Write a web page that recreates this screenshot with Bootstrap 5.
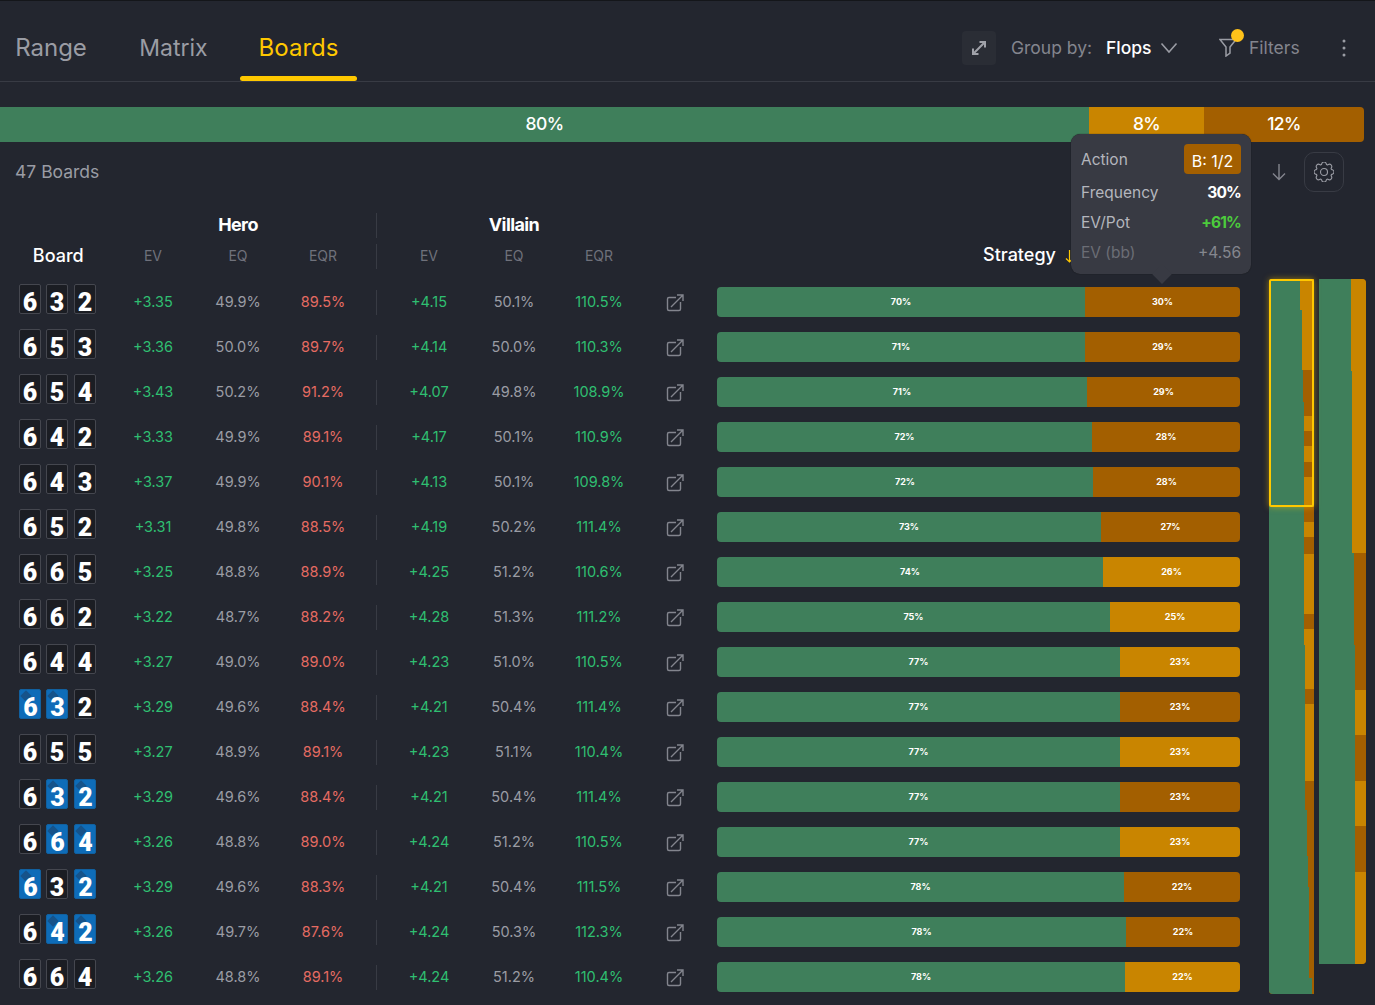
<!doctype html>
<html lang="en"><head><meta charset="utf-8"><title>Boards</title>
<link href="https://cdn.jsdelivr.net/npm/bootstrap@5.3.0/dist/css/bootstrap.min.css" rel="stylesheet">
<style>
html,body{height:1005px;overflow:hidden}
body{background:#23262f;color:#9a9ca4;font-family:Inter,"Liberation Sans",sans-serif;font-size:14.5px;border-top:1px solid #14161a}
.topnav{height:81px;border-bottom:1px solid #383b44}
.tabx{height:80px;padding-top:14px;font-size:24px;color:#9a9ca4;position:relative;text-decoration:none}
.tabx.on{color:#ffc800}
.tabx.on::after{content:"";position:absolute;left:0;right:0;bottom:0;height:5px;background:#ffc800;border-radius:3px}
.t1{width:102px}.t2{width:105px;margin-left:19px;font-size:23px}.t3{width:117px;margin-left:14px}
.navr{padding-top:14px}
.expbtn{width:34px;height:34px;background:#2a2d35;border-radius:4px}
.gby{font-size:17.5px;color:#83858e;margin-left:15px;width:95px}
.flops{font-size:17.5px;color:#fff;font-weight:500;width:54px}
.fwrap{position:relative;margin-left:41px;width:30px;height:20px}
.ydot{position:absolute;left:12px;top:-9px;width:13px;height:13px;border-radius:50%;background:#ffc21a}
.fl{font-size:17.5px;color:#83858e;width:86px}
.kebab{width:18px;margin-right:22px}
.topbar{margin-top:25px;height:35px;width:1364px;border-radius:0 4px 4px 0;overflow:hidden;color:#fff;font-size:17.5px;font-weight:500;letter-spacing:-.6px}
.sgreen{background:#3f7f5b}.so{background:#c98500}.sd{background:#a35f00}
.tools{height:60px;padding-left:15px;font-size:17.5px}
.gear{width:40px;height:40px;border:1px solid #383b44;border-radius:10px;margin:0 31px 0 17px}
.hrow{height:25px;margin-top:11px}
.srow{height:20px;margin-top:8px;margin-bottom:13.5px}
.cb{width:110.5px}.cn{width:85px;text-align:center;flex:none}.cd{width:21px;flex:none;display:flex;justify-content:center}
.cg{width:255px;text-align:center;color:#fff;font-size:18px;font-weight:700;letter-spacing:-.6px;flex:none;padding-bottom:2px}
.vdiv{width:1px;background:#383b44;height:25px}
.hd{color:#6f717b;font-size:14px;padding-bottom:2px}
.bd{color:#fff;font-size:18px;font-weight:500;text-align:center;padding-left:6px;padding-bottom:2px}
.strat{position:absolute;left:983px;top:-5px;color:#fff;font-size:18px;font-weight:500}
.rowx{height:45px}
.rowx .vdiv{height:25px}
.plus{color:#2fbf71}.redx{color:#e56b62}
.cds{gap:5px;padding-left:19px;margin-bottom:6px}
.pc{width:22px;height:30px;box-sizing:border-box;background:#1b1d23;border:1px solid #45474f;border-radius:2px;color:#fff;font:900 25px/20px Roboto,sans-serif;text-align:center;position:relative;z-index:0;padding-top:8px}
.pc:last-child{margin-left:1px}
.pc.bl{background:#0e6cb8;border-color:#11609f;padding-left:1px}
.pc.bl::before{content:"";position:absolute;left:2px;top:2px;width:8px;height:8px;background:#16538a;transform:rotate(45deg);z-index:-1}
.ext{width:67px;flex:none;display:flex;justify-content:center;padding-top:1px}
.stb{width:523px;height:30px;margin-left:8.5px;border-radius:4px;overflow:hidden;color:#fff;font-size:9px;font-weight:700;flex:none}
.mini{position:relative;margin-left:29px;gap:5px;margin-top:-.5px}
.mcol{width:45px;overflow:hidden;border-radius:4px 0 0 4px;background:#a35f00}
.mcol.m2{width:47px;border-radius:0 4px 4px 0}
.mseg{display:block}.mseg i{display:block;height:100%;background:#3f7f5b}
.msel{position:absolute;left:0;top:0;width:45px;height:228px;border:2px solid #ffc800;border-radius:2px;box-shadow:0 0 6px rgba(255,200,0,.5)}
.tipx{position:absolute;left:1071px;top:134px;width:180px;height:140px;background:#383a43;border-radius:9px;padding:10px 10px 0;box-shadow:0 0 1px #111;z-index:5;font-size:15.5px;color:#b4b6bd}
.tipx::after{content:"";position:absolute;left:84px;bottom:-7px;width:14px;height:14px;background:#383a43;transform:rotate(45deg);z-index:-1}
.tr{height:30px}
.tr.tfirst{padding-top:1px}
.tagb{width:57px;height:30px;margin-top:-1px;padding-top:3px;background:#a35f00;border-radius:4px;color:#fff;font-size:16px}
.tw{color:#fff;font-weight:700;letter-spacing:-.8px}.tg{color:#4ccc3c;font-weight:700;letter-spacing:-.8px}.mut{color:#6b6d75}.mut2{color:#85878f}
</style></head><body>
<nav class="topnav d-flex align-items-center">
 <a class="tabx t1 d-flex align-items-center justify-content-center" href="#">Range</a>
 <a class="tabx t2 d-flex align-items-center justify-content-center" href="#">Matrix</a>
 <a class="tabx t3 on d-flex align-items-center justify-content-center" href="#">Boards</a>
 <div class="navr ms-auto d-flex align-items-center">
  <div class="expbtn d-flex align-items-center justify-content-center"><svg width="18" height="18" viewBox="0 0 18 18" fill="none" stroke="#a0a2a9" stroke-width="2"><path d="M3 15L15 3M9.500 3H15V8.500M3 9.500V15H8.500"/></svg></div>
  <span class="gby">Group by:</span><span class="flops">Flops</span>
  <svg width="18" height="12" viewBox="0 0 18 12" fill="none" stroke="#9a9ca4" stroke-width="1.600"><path d="M1.500 1.500L9 10l7.500-8.500"/></svg>
  <div class="fwrap"><svg width="18" height="19" viewBox="0 0 18 19" fill="none" stroke="#9a9ca4" stroke-width="1.500" class="d-block"><path d="M1 1.500h16L11 9v6l-4 3V9z"/></svg><span class="ydot"></span></div>
  <span class="fl">Filters</span>
  <svg class="kebab" width="18" height="18" viewBox="0 0 18 18" fill="#9a9ca4"><circle cx="9" cy="2" r="1.500"/><circle cx="9" cy="9" r="1.500"/><circle cx="9" cy="16" r="1.500"/></svg>
 </div>
</nav>
<div class="topbar d-flex text-center">
 <div class="sgreen d-flex align-items-center justify-content-center" style="width:1089px">80%</div>
 <div class="so d-flex align-items-center justify-content-center" style="width:115px">8%</div>
 <div class="sd d-flex align-items-center justify-content-center flex-grow-1">12%</div>
</div>
<div class="tools d-flex align-items-center">
 <span>47 Boards</span>
 <svg class="ms-auto" width="16" height="18" viewBox="0 0 16 18" fill="none" stroke="#83858e" stroke-width="1.400"><path d="M8 1v15.500M2 10.500l6 6 6-6"/></svg>
 <div class="gear d-flex align-items-center justify-content-center"><svg width="20" height="20" viewBox="0 0 16 16" fill="none" stroke="#9a9ca4" stroke-width=".9"><circle cx="8" cy="8" r="2.800"/><path d="M9.796 1.343c-.527-1.790-3.065-1.790-3.592 0l-.094.319a.873.873 0 0 1-1.255.52l-.292-.16c-1.640-.892-3.433.902-2.540 2.541l.159.292a.873.873 0 0 1-.52 1.255l-.319.094c-1.790.527-1.790 3.065 0 3.592l.319.094a.873.873 0 0 1 .52 1.255l-.16.292c-.892 1.640.901 3.434 2.541 2.540l.292-.159a.873.873 0 0 1 1.255.52l.094.319c.527 1.790 3.065 1.790 3.592 0l.094-.319a.873.873 0 0 1 1.255-.52l.292.16c1.640.893 3.434-.902 2.540-2.541l-.159-.292a.873.873 0 0 1 .52-1.255l.319-.094c1.790-.527 1.790-3.065 0-3.592l-.319-.094a.873.873 0 0 1-.52-1.255l.16-.292c.893-1.640-.902-3.433-2.541-2.540l-.292.159a.873.873 0 0 1-1.255-.52z"/></svg></div>
</div>
<div class="hrow d-flex align-items-center"><div class="cb"></div><div class="cg">Hero</div><div class="cd"><div class="vdiv"></div></div><div class="cg">Villain</div></div>
<div class="srow d-flex align-items-center position-relative">
 <div class="cb bd">Board</div><div class="cn hd">EV</div><div class="cn hd">EQ</div><div class="cn hd">EQR</div><div class="cd"><div class="vdiv"></div></div><div class="cn hd">EV</div><div class="cn hd">EQ</div><div class="cn hd">EQR</div>
 <span class="strat">Strategy <svg width="9" height="13" viewBox="0 0 9 13" fill="none" stroke="#ffc800" stroke-width="1.200" class="ms-1"><path d="M4.500 0v12M1 8.500l3.500 3.500L8 8.500"/></svg></span>
</div>
<div class="tipx">
 <div class="tr tfirst d-flex align-items-center justify-content-between"><span>Action</span><span class="tagb d-flex align-items-center justify-content-center">B: 1/2</span></div>
 <div class="tr d-flex align-items-center justify-content-between mt-1"><span>Frequency</span><span class="tw">30%</span></div>
 <div class="tr d-flex align-items-center justify-content-between"><span>EV/Pot</span><span class="tg">+61%</span></div>
 <div class="tr d-flex align-items-center justify-content-between"><span class="mut">EV (bb)</span><span class="mut2">+4.56</span></div>
</div>
<svg width="0" height="0" class="position-absolute"><defs><symbol id="extl" viewBox="0 0 18 18"><g fill="none" stroke="#83858e" stroke-width="1.400"><path d="M10 3.500H3a1.500 1.500 0 0 0-1.500 1.500v10A1.500 1.500 0 0 0 3 16.500h10a1.500 1.500 0 0 0 1.500-1.500V8"/><path d="M5 13L17 1M11 1h6v6"/></g></symbol></defs></svg>
<div class="d-flex">
<div>
<div class="rowx d-flex align-items-center"><div class="cb d-flex cds"><span class="pc">6</span><span class="pc">3</span><span class="pc">2</span></div><div class="cn plus">+3.35</div><div class="cn">49.9%</div><div class="cn redx">89.5%</div><div class="cd"><div class="vdiv"></div></div><div class="cn plus">+4.15</div><div class="cn">50.1%</div><div class="cn plus">110.5%</div><div class="ext"><svg width="18" height="18"><use href="#extl"/></svg></div><div class="stb d-flex"><div class="sgreen d-flex align-items-center justify-content-center" style="width:368px">70%</div><div class="sd flex-grow-1 d-flex align-items-center justify-content-center">30%</div></div></div>
<div class="rowx d-flex align-items-center"><div class="cb d-flex cds"><span class="pc">6</span><span class="pc">5</span><span class="pc">3</span></div><div class="cn plus">+3.36</div><div class="cn">50.0%</div><div class="cn redx">89.7%</div><div class="cd"><div class="vdiv"></div></div><div class="cn plus">+4.14</div><div class="cn">50.0%</div><div class="cn plus">110.3%</div><div class="ext"><svg width="18" height="18"><use href="#extl"/></svg></div><div class="stb d-flex"><div class="sgreen d-flex align-items-center justify-content-center" style="width:368px">71%</div><div class="sd flex-grow-1 d-flex align-items-center justify-content-center">29%</div></div></div>
<div class="rowx d-flex align-items-center"><div class="cb d-flex cds"><span class="pc">6</span><span class="pc">5</span><span class="pc">4</span></div><div class="cn plus">+3.43</div><div class="cn">50.2%</div><div class="cn redx">91.2%</div><div class="cd"><div class="vdiv"></div></div><div class="cn plus">+4.07</div><div class="cn">49.8%</div><div class="cn plus">108.9%</div><div class="ext"><svg width="18" height="18"><use href="#extl"/></svg></div><div class="stb d-flex"><div class="sgreen d-flex align-items-center justify-content-center" style="width:370px">71%</div><div class="sd flex-grow-1 d-flex align-items-center justify-content-center">29%</div></div></div>
<div class="rowx d-flex align-items-center"><div class="cb d-flex cds"><span class="pc">6</span><span class="pc">4</span><span class="pc">2</span></div><div class="cn plus">+3.33</div><div class="cn">49.9%</div><div class="cn redx">89.1%</div><div class="cd"><div class="vdiv"></div></div><div class="cn plus">+4.17</div><div class="cn">50.1%</div><div class="cn plus">110.9%</div><div class="ext"><svg width="18" height="18"><use href="#extl"/></svg></div><div class="stb d-flex"><div class="sgreen d-flex align-items-center justify-content-center" style="width:375px">72%</div><div class="sd flex-grow-1 d-flex align-items-center justify-content-center">28%</div></div></div>
<div class="rowx d-flex align-items-center"><div class="cb d-flex cds"><span class="pc">6</span><span class="pc">4</span><span class="pc">3</span></div><div class="cn plus">+3.37</div><div class="cn">49.9%</div><div class="cn redx">90.1%</div><div class="cd"><div class="vdiv"></div></div><div class="cn plus">+4.13</div><div class="cn">50.1%</div><div class="cn plus">109.8%</div><div class="ext"><svg width="18" height="18"><use href="#extl"/></svg></div><div class="stb d-flex"><div class="sgreen d-flex align-items-center justify-content-center" style="width:376px">72%</div><div class="sd flex-grow-1 d-flex align-items-center justify-content-center">28%</div></div></div>
<div class="rowx d-flex align-items-center"><div class="cb d-flex cds"><span class="pc">6</span><span class="pc">5</span><span class="pc">2</span></div><div class="cn plus">+3.31</div><div class="cn">49.8%</div><div class="cn redx">88.5%</div><div class="cd"><div class="vdiv"></div></div><div class="cn plus">+4.19</div><div class="cn">50.2%</div><div class="cn plus">111.4%</div><div class="ext"><svg width="18" height="18"><use href="#extl"/></svg></div><div class="stb d-flex"><div class="sgreen d-flex align-items-center justify-content-center" style="width:384px">73%</div><div class="sd flex-grow-1 d-flex align-items-center justify-content-center">27%</div></div></div>
<div class="rowx d-flex align-items-center"><div class="cb d-flex cds"><span class="pc">6</span><span class="pc">6</span><span class="pc">5</span></div><div class="cn plus">+3.25</div><div class="cn">48.8%</div><div class="cn redx">88.9%</div><div class="cd"><div class="vdiv"></div></div><div class="cn plus">+4.25</div><div class="cn">51.2%</div><div class="cn plus">110.6%</div><div class="ext"><svg width="18" height="18"><use href="#extl"/></svg></div><div class="stb d-flex"><div class="sgreen d-flex align-items-center justify-content-center" style="width:386px">74%</div><div class="so flex-grow-1 d-flex align-items-center justify-content-center">26%</div></div></div>
<div class="rowx d-flex align-items-center"><div class="cb d-flex cds"><span class="pc">6</span><span class="pc">6</span><span class="pc">2</span></div><div class="cn plus">+3.22</div><div class="cn">48.7%</div><div class="cn redx">88.2%</div><div class="cd"><div class="vdiv"></div></div><div class="cn plus">+4.28</div><div class="cn">51.3%</div><div class="cn plus">111.2%</div><div class="ext"><svg width="18" height="18"><use href="#extl"/></svg></div><div class="stb d-flex"><div class="sgreen d-flex align-items-center justify-content-center" style="width:393px">75%</div><div class="so flex-grow-1 d-flex align-items-center justify-content-center">25%</div></div></div>
<div class="rowx d-flex align-items-center"><div class="cb d-flex cds"><span class="pc">6</span><span class="pc">4</span><span class="pc">4</span></div><div class="cn plus">+3.27</div><div class="cn">49.0%</div><div class="cn redx">89.0%</div><div class="cd"><div class="vdiv"></div></div><div class="cn plus">+4.23</div><div class="cn">51.0%</div><div class="cn plus">110.5%</div><div class="ext"><svg width="18" height="18"><use href="#extl"/></svg></div><div class="stb d-flex"><div class="sgreen d-flex align-items-center justify-content-center" style="width:403px">77%</div><div class="so flex-grow-1 d-flex align-items-center justify-content-center">23%</div></div></div>
<div class="rowx d-flex align-items-center"><div class="cb d-flex cds"><span class="pc bl">6</span><span class="pc bl">3</span><span class="pc">2</span></div><div class="cn plus">+3.29</div><div class="cn">49.6%</div><div class="cn redx">88.4%</div><div class="cd"><div class="vdiv"></div></div><div class="cn plus">+4.21</div><div class="cn">50.4%</div><div class="cn plus">111.4%</div><div class="ext"><svg width="18" height="18"><use href="#extl"/></svg></div><div class="stb d-flex"><div class="sgreen d-flex align-items-center justify-content-center" style="width:403px">77%</div><div class="sd flex-grow-1 d-flex align-items-center justify-content-center">23%</div></div></div>
<div class="rowx d-flex align-items-center"><div class="cb d-flex cds"><span class="pc">6</span><span class="pc">5</span><span class="pc">5</span></div><div class="cn plus">+3.27</div><div class="cn">48.9%</div><div class="cn redx">89.1%</div><div class="cd"><div class="vdiv"></div></div><div class="cn plus">+4.23</div><div class="cn">51.1%</div><div class="cn plus">110.4%</div><div class="ext"><svg width="18" height="18"><use href="#extl"/></svg></div><div class="stb d-flex"><div class="sgreen d-flex align-items-center justify-content-center" style="width:403px">77%</div><div class="so flex-grow-1 d-flex align-items-center justify-content-center">23%</div></div></div>
<div class="rowx d-flex align-items-center"><div class="cb d-flex cds"><span class="pc">6</span><span class="pc bl">3</span><span class="pc bl">2</span></div><div class="cn plus">+3.29</div><div class="cn">49.6%</div><div class="cn redx">88.4%</div><div class="cd"><div class="vdiv"></div></div><div class="cn plus">+4.21</div><div class="cn">50.4%</div><div class="cn plus">111.4%</div><div class="ext"><svg width="18" height="18"><use href="#extl"/></svg></div><div class="stb d-flex"><div class="sgreen d-flex align-items-center justify-content-center" style="width:403px">77%</div><div class="sd flex-grow-1 d-flex align-items-center justify-content-center">23%</div></div></div>
<div class="rowx d-flex align-items-center"><div class="cb d-flex cds"><span class="pc">6</span><span class="pc bl">6</span><span class="pc bl">4</span></div><div class="cn plus">+3.26</div><div class="cn">48.8%</div><div class="cn redx">89.0%</div><div class="cd"><div class="vdiv"></div></div><div class="cn plus">+4.24</div><div class="cn">51.2%</div><div class="cn plus">110.5%</div><div class="ext"><svg width="18" height="18"><use href="#extl"/></svg></div><div class="stb d-flex"><div class="sgreen d-flex align-items-center justify-content-center" style="width:403px">77%</div><div class="so flex-grow-1 d-flex align-items-center justify-content-center">23%</div></div></div>
<div class="rowx d-flex align-items-center"><div class="cb d-flex cds"><span class="pc bl">6</span><span class="pc">3</span><span class="pc bl">2</span></div><div class="cn plus">+3.29</div><div class="cn">49.6%</div><div class="cn redx">88.3%</div><div class="cd"><div class="vdiv"></div></div><div class="cn plus">+4.21</div><div class="cn">50.4%</div><div class="cn plus">111.5%</div><div class="ext"><svg width="18" height="18"><use href="#extl"/></svg></div><div class="stb d-flex"><div class="sgreen d-flex align-items-center justify-content-center" style="width:407px">78%</div><div class="sd flex-grow-1 d-flex align-items-center justify-content-center">22%</div></div></div>
<div class="rowx d-flex align-items-center"><div class="cb d-flex cds"><span class="pc">6</span><span class="pc bl">4</span><span class="pc bl">2</span></div><div class="cn plus">+3.26</div><div class="cn">49.7%</div><div class="cn redx">87.6%</div><div class="cd"><div class="vdiv"></div></div><div class="cn plus">+4.24</div><div class="cn">50.3%</div><div class="cn plus">112.3%</div><div class="ext"><svg width="18" height="18"><use href="#extl"/></svg></div><div class="stb d-flex"><div class="sgreen d-flex align-items-center justify-content-center" style="width:409px">78%</div><div class="sd flex-grow-1 d-flex align-items-center justify-content-center">22%</div></div></div>
<div class="rowx d-flex align-items-center"><div class="cb d-flex cds"><span class="pc">6</span><span class="pc">6</span><span class="pc">4</span></div><div class="cn plus">+3.26</div><div class="cn">48.8%</div><div class="cn redx">89.1%</div><div class="cd"><div class="vdiv"></div></div><div class="cn plus">+4.24</div><div class="cn">51.2%</div><div class="cn plus">110.4%</div><div class="ext"><svg width="18" height="18"><use href="#extl"/></svg></div><div class="stb d-flex"><div class="sgreen d-flex align-items-center justify-content-center" style="width:408px">78%</div><div class="so flex-grow-1 d-flex align-items-center justify-content-center">22%</div></div></div>
</div>
<div class="mini d-flex align-items-start">
 <div class="mcol">
  <span class="mseg so" style="height:31px"><i style="width:31px"></i></span>
  <span class="mseg so" style="height:60px"><i style="width:33px"></i></span>
  <span class="mseg sd" style="height:32px"><i style="width:34px"></i></span>
  <span class="mseg sd" style="height:14px"><i style="width:35px"></i></span>
  <span class="mseg so" style="height:15px"><i style="width:35px"></i></span>
  <span class="mseg sd" style="height:15px"><i style="width:35px"></i></span>
  <span class="mseg so" style="height:16px"><i style="width:35px"></i></span>
  <span class="mseg sd" style="height:15px"><i style="width:35px"></i></span>
  <span class="mseg so" style="height:30px"><i style="width:35px"></i></span>
  <span class="mseg sd" style="height:15px"><i style="width:35px"></i></span>
  <span class="mseg so" style="height:15px"><i style="width:35px"></i></span>
  <span class="mseg sd" style="height:16.6px"><i style="width:35px"></i></span>
  <span class="mseg so" style="height:60px"><i style="width:35px"></i></span>
  <span class="mseg sd" style="height:15px"><i style="width:35px"></i></span>
  <span class="mseg so" style="height:16.7px"><i style="width:35px"></i></span>
  <span class="mseg so" style="height:44px"><i style="width:36px"></i></span>
  <span class="mseg sd" style="height:15px"><i style="width:36px"></i></span>
  <span class="mseg so" style="height:77px"><i style="width:36px"></i></span>
  <span class="mseg sd" style="height:29px"><i style="width:36px"></i></span>
  <span class="mseg sd" style="height:46px"><i style="width:37.5px"></i></span>
  <span class="mseg sd" style="height:31px"><i style="width:39px"></i></span>
  <span class="mseg sd" style="height:91px"><i style="width:40px"></i></span>
  <span class="mseg sd" style="height:16px"><i style="width:43px"></i></span>
 </div>
 <div class="mcol m2">
  <span class="mseg so" style="height:92px"><i style="width:32px"></i></span>
  <span class="mseg so" style="height:182px"><i style="width:33.3px"></i></span>
  <span class="mseg sd" style="height:92px"><i style="width:35px"></i></span>
  <span class="mseg sd" style="height:45px"><i style="width:36px"></i></span>
  <span class="mseg so" style="height:45px"><i style="width:36px"></i></span>
  <span class="mseg sd" style="height:46px"><i style="width:36px"></i></span>
  <span class="mseg so" style="height:45px"><i style="width:36px"></i></span>
  <span class="mseg sd" style="height:46px"><i style="width:36px"></i></span>
  <span class="mseg so" style="height:92px"><i style="width:36px"></i></span>
 </div>
 <div class="msel"></div>
</div>
</div>
</body></html>
